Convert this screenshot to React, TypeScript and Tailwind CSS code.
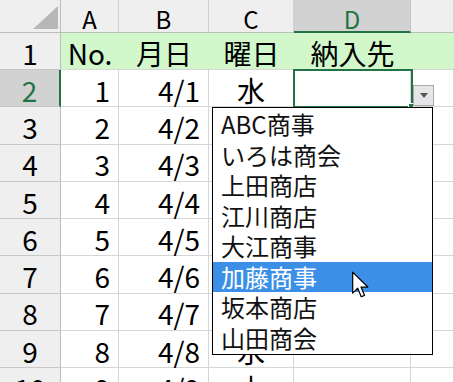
import React from "react";

const rows = [
  { n: 2, a: "1", b: "4/1", c: "水" },
  { n: 3, a: "2", b: "4/2", c: "" },
  { n: 4, a: "3", b: "4/3", c: "" },
  { n: 5, a: "4", b: "4/4", c: "" },
  { n: 6, a: "5", b: "4/5", c: "" },
  { n: 7, a: "6", b: "4/6", c: "" },
  { n: 8, a: "7", b: "4/7", c: "" },
  { n: 9, a: "8", b: "4/8", c: "水" },
  { n: 10, a: "9", b: "4/9", c: "木" },
];

const items = ["ABC商事", "いろは商会", "上田商店", "江川商店", "大江商事", "加藤商事", "坂本商店", "山田商会"];

function ColHead({ label, sel }: { label: string; sel?: boolean }) {
  return (
    <div
      className={
        sel
          ? "flex items-center justify-center pt-[6px] bg-[#d2d2d2] text-[#217346] border-r border-r-[#c4c4c4] border-b-2 border-b-[#217346] text-[24px] leading-none"
          : "flex items-center justify-center pt-[5px] bg-[#efefef] text-black border-r border-r-[#d0d0d0] border-b border-b-[#bdbdbd] text-[24px] leading-none"
      }
    >
      {label}
    </div>
  );
}

function RowHead({ label, sel }: { label: string | number; sel?: boolean }) {
  return (
    <div
      className={
        sel
          ? "flex items-center justify-center pt-[3px] bg-[#d2d2d2] text-[#217346] border-r-2 border-r-[#217346] border-b border-b-[#c8c8c8] text-[28px] leading-none"
          : "flex items-center justify-center pt-[3px] bg-[#efefef] text-black border-r border-r-[#bdbdbd] border-b border-b-[#c8c8c8] text-[28px] leading-none"
      }
    >
      {label}
    </div>
  );
}

function Cell({ children, align }: { children?: React.ReactNode; align: "r" | "c" }) {
  return (
    <div
      className={
        align === "r"
          ? "flex items-center justify-end pr-[8px] pt-[3px] bg-white border-r border-b border-[#d6d6d6] text-[28px] leading-none text-black"
          : "flex items-center justify-center pt-[3px] bg-white border-r border-b border-[#d6d6d6] text-[28px] leading-none text-black"
      }
    >
      {children}
    </div>
  );
}

function GreenCell({ children }: { children?: React.ReactNode }) {
  return (
    <div className="flex items-center justify-center pt-[3px] bg-[#d1f7cb] border-b border-b-[#d6d6d6] text-[28px] leading-none text-black">
      {children}
    </div>
  );
}

export default function App() {
  return (
    <div className="relative w-[454px] h-[382px] overflow-hidden bg-white font-['Noto_Sans_CJK_JP',sans-serif]">
      <div className="grid grid-cols-[61px_58px_90px_85px_117px_1fr] grid-rows-[33px_37px_repeat(9,37.3px)]">
        {/* header row */}
        <div className="relative bg-[#efefef] border-r border-r-[#bdbdbd] border-b border-b-[#bdbdbd]">
          <svg className="absolute left-[33px] top-[6px]" width="25" height="23" viewBox="0 0 25 23">
            <polygon points="25,0 25,23 0,23" fill="#b7b7b7" />
          </svg>
        </div>
        <ColHead label="A" />
        <ColHead label="B" />
        <ColHead label="C" />
        <ColHead label="D" sel />
        <ColHead label="" />

        {/* row 1 */}
        <RowHead label={1} />
        <GreenCell>No.</GreenCell>
        <GreenCell>月日</GreenCell>
        <GreenCell>曜日</GreenCell>
        <GreenCell>納入先</GreenCell>
        <GreenCell />

        {rows.map((r) => (
          <React.Fragment key={r.n}>
            <RowHead label={r.n} sel={r.n === 2} />
            <Cell align="r">{r.a}</Cell>
            <Cell align="r">{r.b}</Cell>
            <Cell align="c">{r.c}</Cell>
            <Cell align="c" />
            <Cell align="c" />
          </React.Fragment>
        ))}
      </div>

      {/* selected cell outline */}
      <div className="absolute left-[293px] top-[69px] w-[120px] h-[39px] border-2 border-[#217346]" />
      <div className="absolute left-[408px] top-[103px] w-[6px] h-[6px] bg-[#217346] border border-white" />

      {/* dropdown button */}
      <div className="absolute left-[413px] top-[85px] w-[21px] h-[21px] bg-[#e6e6e8] border border-[#a9a9ad] flex items-center justify-center">
        <svg width="8" height="5" viewBox="0 0 8 5">
          <polygon points="0,0 8,0 4,5" fill="#555" />
        </svg>
      </div>

      {/* dropdown list */}
      <div className="absolute left-[212px] top-[107px] w-[221px] h-[248px] bg-white border border-black pt-[1px]">
        {items.map((t, i) => (
          <div
            key={t}
            className={
              i === 5
                ? "h-[30.5px] flex items-center pl-[8px] text-[24px] leading-none bg-[#3c8fe6] text-white"
                : "h-[30.5px] flex items-center pl-[8px] text-[24px] leading-none text-[#111]"
            }
          >
            {t}
          </div>
        ))}
      </div>

      {/* mouse cursor */}
      <svg className="absolute left-[352px] top-[271px]" width="17" height="28" viewBox="0 0 12.5 20">
        <path
          d="M0.5 0.5 L0.5 16 L4.2 12.4 L6.8 18.6 L9.2 17.6 L6.6 11.5 L11.6 11.5 Z"
          fill="white"
          stroke="black"
          strokeWidth="0.9"
          strokeLinejoin="round"
        />
      </svg>
    </div>
  );
}
